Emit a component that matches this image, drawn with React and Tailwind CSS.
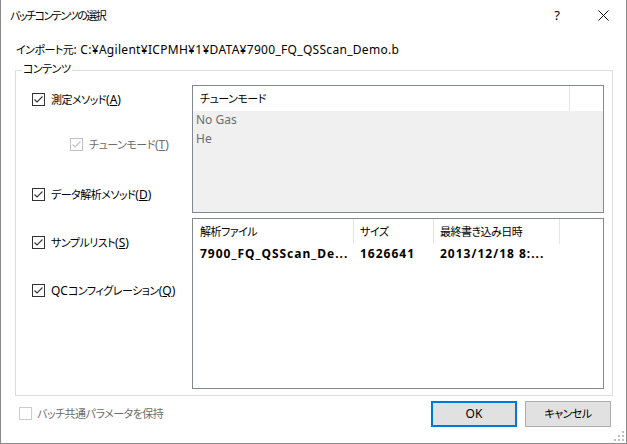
import React from "react";

// Japanese runs are set a touch smaller and tighter to match the UI font's proportional kana
function J({ children, className = "tracking-[-0.5px]" }) {
  return <span className={`text-[11px] ${className}`}>{children}</span>;
}

function Check({ checked, disabled }) {
  const c = disabled ? "#c2c2c2" : "#333333";
  return (
    <span
      className={`w-[13px] h-[13px] border shrink-0 bg-white flex items-center justify-center ${
        disabled ? "border-[#c2c2c2]" : "border-[#333333]"
      }`}
    >
      {checked && (
        <svg width="11" height="11" viewBox="0 0 11 11">
          <path d="M1.5 5.5 L4 8 L9.5 2.5" stroke={c} strokeWidth="1.1" fill="none" />
        </svg>
      )}
    </span>
  );
}

function Row({ children, className = "", disabled }) {
  return (
    <div className={`h-[13px] flex items-center gap-[6px] ${className}`}>
      <Check checked disabled={disabled} />
      <span className={`leading-[16px] whitespace-nowrap ${disabled ? "text-[#6d6d6d]" : ""}`}>{children}</span>
    </div>
  );
}

export default function App() {
  return (
    <div className="relative w-[627px] h-[444px] bg-white border-l border-r border-b border-[#8a8a8a] flex flex-col text-[12px] text-black font-['Noto_Sans','Noto_Sans_CJK_JP',sans-serif] [font-feature-settings:'palt']">
      {/* title bar */}
      <div className="h-[31px] shrink-0 flex items-center pl-[9px]">
        <span className="leading-[16px]">
          <J className="tracking-[-1.5px]">バッチコンテンツの選択</J>
        </span>
        <div className="ml-auto flex">
          <span className="w-[46px] h-[31px] flex items-center justify-center text-[13px]">?</span>
          <span className="w-[46px] h-[31px] flex items-center justify-center">
            <svg width="11" height="11" viewBox="0 0 11 11">
              <path d="M0.5 0.5 L10.5 10.5 M10.5 0.5 L0.5 10.5" stroke="#111" strokeWidth="1" />
            </svg>
          </span>
        </div>
      </div>

      <div className="mt-[11px] pl-[15px] leading-[16px] whitespace-nowrap">
        <J>インポート元</J>
        <span className="tracking-[0.3px]">: C:¥Agilent¥ICPMH¥1¥DATA¥7900_FQ_QSScan_Demo.b</span>
      </div>

      {/* group box */}
      <div className="relative mt-[12px] ml-[14px] w-[598px] h-[326px] shrink-0 border border-[#dcdcdc] flex pt-[14px]">
        <span className="absolute left-[6px] -top-[10px] bg-white px-[1px] leading-[16px]">
          <J>コンテンツ</J>
        </span>

        <div className="w-[176px] pl-[16px] flex flex-col">
          <Row className="mt-[8px]">
            <J>測定メソッド</J>(<u>A</u>)
          </Row>
          <Row className="mt-[32px] ml-[38px]" disabled>
            <J>チューンモード</J>(<u>T</u>)
          </Row>
          <Row className="mt-[37px]">
            <J>データ解析メソッド</J>(<u>D</u>)
          </Row>
          <Row className="mt-[35px]">
            <J>サンプルリスト</J>(<u>S</u>)
          </Row>
          <Row className="mt-[35px]">
            QC<J>コンフィグレーション</J>(<u>Q</u>)
          </Row>
        </div>

        <div className="flex flex-col gap-[5px]">
          {/* tune mode list */}
          <div className="w-[412px] h-[128px] border border-[#828790] flex flex-col">
            <div className="h-[25px] bg-white flex shrink-0">
              <div className="w-[377px] border-r border-[#e5e5e5] pl-[7px] flex items-center leading-[16px]">
                <J>チューンモード</J>
              </div>
            </div>
            <div className="flex-1 bg-[#f0f0f0] pl-[3px] text-[#6d6d6d]">
              <div className="h-[18px] leading-[18px]">No Gas</div>
              <div className="h-[20px] leading-[20px]">He</div>
            </div>
          </div>

          {/* file list */}
          <div className="w-[412px] h-[171px] border border-[#828790] flex flex-col bg-white">
            <div className="h-[25px] flex shrink-0 leading-[16px]">
              <div className="w-[161px] border-r border-[#e5e5e5] pl-[7px] flex items-center">
                <J>解析ファイル</J>
              </div>
              <div className="w-[80px] border-r border-[#e5e5e5] pl-[6px] flex items-center">
                <J>サイズ</J>
              </div>
              <div className="w-[126px] border-r border-[#e5e5e5] pl-[6px] flex items-center">
                <J>最終書き込み日時</J>
              </div>
            </div>
            <div className="flex h-[19px] items-center font-bold leading-[16px] whitespace-nowrap tracking-[1px]">
              <div className="w-[161px] pl-[7px]">7900_FQ_QSScan_De...</div>
              <div className="w-[80px] pl-[6px]">1626641</div>
              <div className="w-[126px] pl-[6px]">2013/12/18 8:...</div>
            </div>
          </div>
        </div>
      </div>

      {/* bottom */}
      <div className="mt-[5px] h-[26px] flex items-center pl-[18px] pr-[15px]">
        <div className="flex items-center gap-[5px] mt-[-1px]">
          <span className="w-[13px] h-[13px] border border-[#cccccc] bg-white" />
          <span className="text-[#6d6d6d] leading-[16px]">
            <J>バッチ共通パラメータを保持</J>
          </span>
        </div>
        <div className="ml-auto flex gap-[8px]">
          <button className="w-[86px] h-[26px] border-2 border-[#0078d7] bg-[#e1e1e1] leading-[16px]">OK</button>
          <button className="w-[86px] h-[26px] border border-[#adadad] bg-[#e1e1e1] leading-[16px]">
            <J>キャンセル</J>
          </button>
        </div>
      </div>

      {/* resize grip */}
      <svg className="absolute right-[2px] bottom-[2px]" width="10" height="10" viewBox="0 0 10 10">
        <rect x="8" y="0" width="2" height="2" fill="#bdbdbd" />
        <rect x="4" y="4" width="2" height="2" fill="#bdbdbd" />
        <rect x="8" y="4" width="2" height="2" fill="#bdbdbd" />
        <rect x="0" y="8" width="2" height="2" fill="#bdbdbd" />
        <rect x="4" y="8" width="2" height="2" fill="#bdbdbd" />
        <rect x="8" y="8" width="2" height="2" fill="#bdbdbd" />
      </svg>
    </div>
  );
}
